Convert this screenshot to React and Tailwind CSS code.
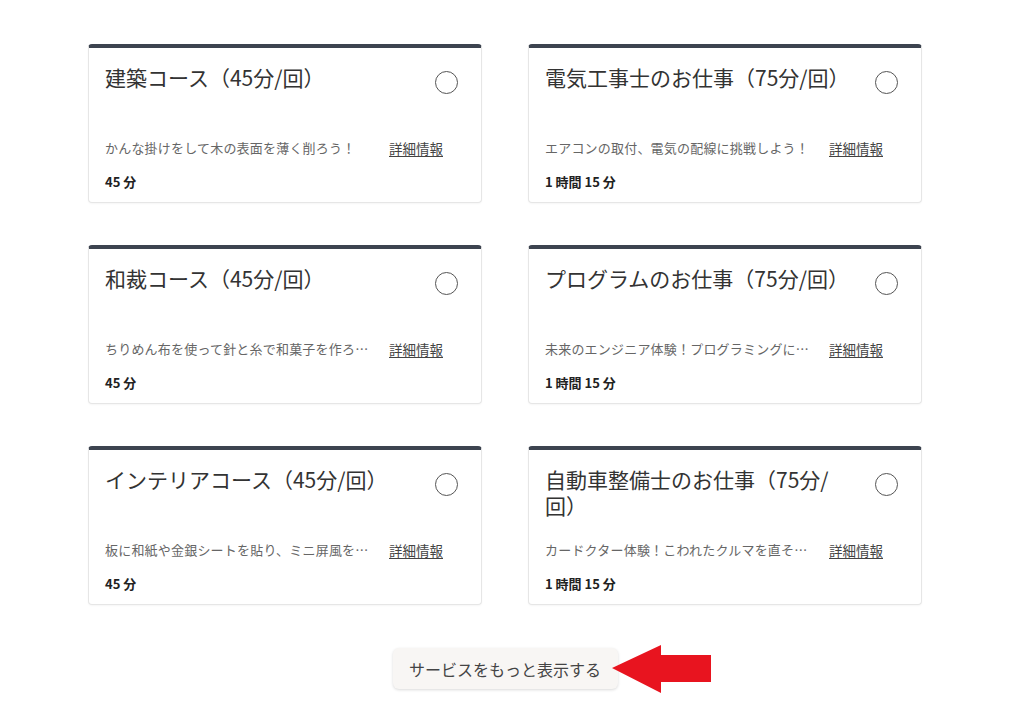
import React from 'react';

const services = [
  { title: '建築コース（45分/回）', desc: 'かんな掛けをして木の表面を薄く削ろう！', time: '45 分' },
  { title: '電気工事士のお仕事（75分/回）', desc: 'エアコンの取付、電気の配線に挑戦しよう！', time: '1 時間 15 分' },
  { title: '和裁コース（45分/回）', desc: 'ちりめん布を使って針と糸で和菓子を作ろう！', time: '45 分' },
  { title: 'プログラムのお仕事（75分/回）', desc: '未来のエンジニア体験！プログラミングに挑戦しよう！', time: '1 時間 15 分' },
  { title: 'インテリアコース（45分/回）', desc: '板に和紙や金銀シートを貼り、ミニ屏風を作ろう！', time: '45 分' },
  { title: '自動車整備士のお仕事（75分/回）', desc: 'カードクター体験！こわれたクルマを直そう！', time: '1 時間 15 分' },
];

const ServiceCard = ({ title, desc, time }) => (
  <div className="h-[159px] rounded-[4px] border border-[#e6e6e6] border-t-[4px] border-t-[#3d4450] bg-white shadow-[0_1px_2px_rgba(0,0,0,0.04)] px-[16px] pt-[16px]">
    <div className="flex h-[74px] justify-between">
      <div className="w-[304px] text-[21px] leading-[26px] text-[#333]">{title}</div>
      <div className="mt-[7px] mr-[7px] h-[23px] w-[23px] shrink-0 rounded-full border-[1.5px] border-[#555]" />
    </div>
    <div className="flex items-center text-[13px] leading-[20px]">
      <span className="w-[272px] truncate tracking-[0.2px] text-[#666]">{desc}</span>
      <a href="#" className="ml-[12px] text-[13.5px] text-[#444] underline underline-offset-2">
        詳細情報
      </a>
    </div>
    <div className="mt-[14px] text-[13px] font-bold leading-[20px] text-[#222]">{time}</div>
  </div>
);

export default function App() {
  return (
    <div className="min-h-[717px] bg-white pt-[44px] font-['Noto_Sans_CJK_JP','Noto_Sans',sans-serif]">
      <div className="ml-[88px] grid w-[834px] grid-cols-2 gap-x-[46px] gap-y-[42px]">
        {services.map((s) => (
          <ServiceCard key={s.title} {...s} />
        ))}
      </div>
      <div className="relative ml-[88px] mt-[43px] flex w-[834px] justify-center">
        <button
          type="button"
          className="h-[41px] w-[225px] rounded-md bg-[#f8f6f4] text-[16px] text-[#444] shadow-[0_1px_3px_rgba(0,0,0,0.15)]"
        >
          サービスをもっと表示する
        </button>
        <svg
          className="absolute left-[524px] top-[-3px]"
          width="100"
          height="50"
          viewBox="0 0 100 50"
        >
          <polygon points="0,23 49,0 49,10 99,10 99,37 49,37 49,48" fill="#e8141f" />
        </svg>
      </div>
    </div>
  );
}
